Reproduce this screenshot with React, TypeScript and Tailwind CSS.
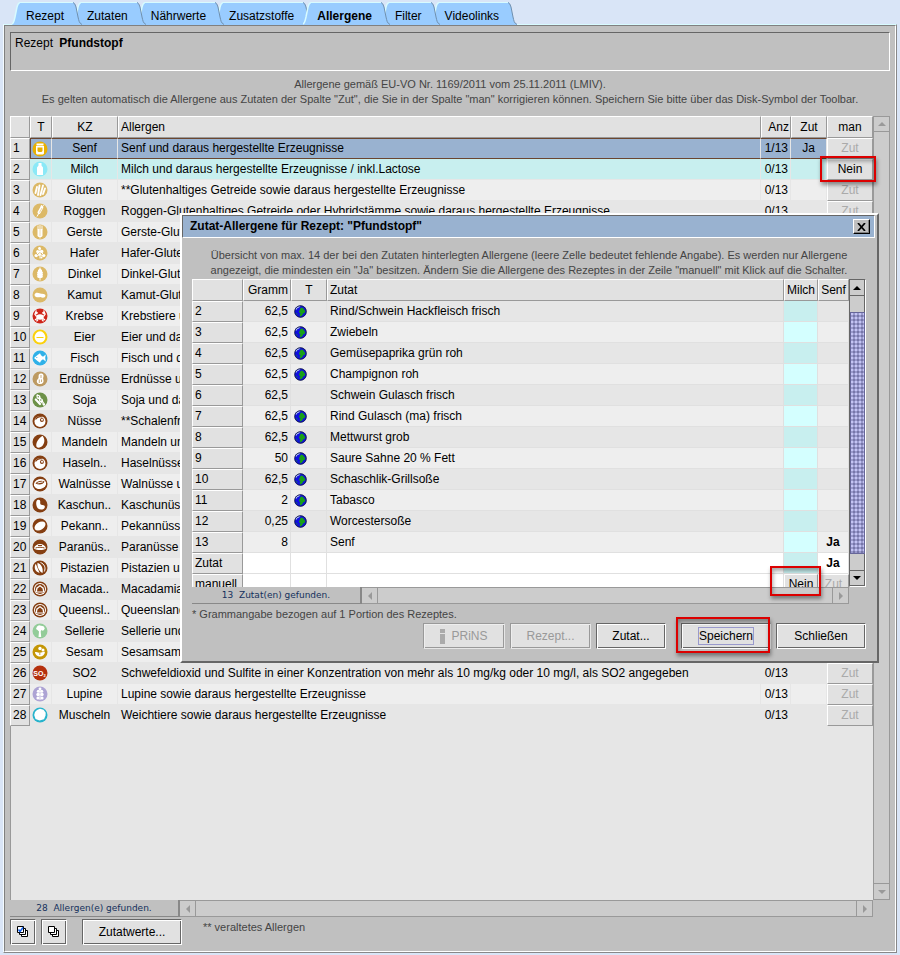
import type { ReactNode } from "react";

type Allergen = {
  kz: string;
  name: string;
  color: string;
  glyph: ReactNode;
};

const nut = (
  <>
    <circle cx="8" cy="8.4" r="5.5" fill="#fff" />
    <path d="M3.500 6.500C5 4 8 3.200 10.500 4" stroke="#853f12" strokeWidth="1.100" fill="none" />
    <circle cx="9.900" cy="6.900" r="2" fill="#853f12" />
    <circle cx="10" cy="6.800" r="1" fill="#fff" />
  </>
);

const macadamia = (
  <>
    <circle cx="8" cy="8" r="6" fill="#fff" />
    <circle cx="8" cy="8" r="5" fill="#853f12" />
    <path d="M8 4l3 2.200 1 1.300v3l-1 1H5l-1-1v-3l1-1.300z" fill="#fff" />
    <path d="M8 5.500l2.500 2 .5 3H5l.500-3z" fill="#853f12" />
  </>
);

const allergens: Allergen[] = [
  { kz: "Senf", name: "Senf und daraus hergestellte Erzeugnisse", color: "#e8b000", glyph: <><path d="M4.500 2.500h7v2h-7zM4 5h8v7.500l-1 1H5l-1-1z" fill="#fff" /><path d="M5.500 6.500h5v3.500l-1 1h-3l-1-1z" fill="#e8b000" /></> },
  { kz: "Milch", name: "Milch und daraus hergestellte Erzeugnisse / inkl.Lactose", color: "#8be9f7", glyph: <path d="M6.500 2h3v2.500L11 6.500V14H5V6.500l1.500-2z" fill="#fff" /> },
  { kz: "Gluten", name: "**Glutenhaltiges Getreide sowie daraus hergestellte Erzeugnisse", color: "#dcb967", glyph: <path d="M3.500 11l1.500-6M6 13l1.500-9.500M8.500 13l2.500-9.500M11 12l2-5.500" stroke="#fff" strokeWidth="1.900" strokeLinecap="round" strokeDasharray="2.5 .3" /> },
  { kz: "Roggen", name: "Roggen-Glutenhaltiges Getreide oder Hybridstämme sowie daraus hergestellte Erzeugnisse", color: "#dcb967", glyph: <><path d="M7 9.500l2.800-5" stroke="#fff" strokeWidth="3" strokeLinecap="round" /><path d="M5 13.500l6.500-11.500M9 4l.5-2" stroke="#fff" /><path d="M7.500 9.500l2.500-4.500" stroke="#dcb967" strokeWidth=".6" /></> },
  { kz: "Gerste", name: "Gerste-Glutenhaltiges Getreide oder Hybridstämme sowie daraus hergestellte Erzeugnisse", color: "#dcb967", glyph: <><path d="M6 1.500v4M8 1v13.500M10 1.500v4" stroke="#fff" strokeWidth=".9" /><path d="M5.500 5h5v7l-1 1h-3l-1-1z" fill="#fff" /><path d="M8 5v7" stroke="#dcb967" strokeWidth=".5" /></> },
  { kz: "Hafer", name: "Hafer-Glutenhaltiges Getreide oder Hybridstämme sowie daraus hergestellte Erzeugnisse", color: "#dcb967", glyph: <><path d="M8 3v10.500M8 6l-3 3M8 6l3 3M8 9l-4 3M8 9l4 3" stroke="#fff" /><g fill="#fff"><circle cx="7.500" cy="3.500" r="1.400" /><circle cx="5.700" cy="6.500" r="1.500" /><circle cx="9.800" cy="6.400" r="1.600" /><circle cx="4" cy="10.500" r="1.500" /><circle cx="7.500" cy="9.500" r="1.300" /><circle cx="11.800" cy="10.500" r="1.600" /><circle cx="9.500" cy="12.500" r="1" /></g></> },
  { kz: "Dinkel", name: "Dinkel-Glutenhaltiges Getreide oder Hybridstämme sowie daraus hergestellte Erzeugnisse", color: "#dcb967", glyph: <><path d="M8 1.500v13" stroke="#fff" /><path d="M8 2.500l2 1.500v1.500l1 .5-.5 1.500.5 1-.5 1.500.5 1-1.500 1H6.500L5 11l.5-1L5 8.500l.5-1L5 6l1-.5V4z" fill="#fff" /></> },
  { kz: "Kamut", name: "Kamut-Glutenhaltiges Getreide oder Hybridstämme sowie daraus hergestellte Erzeugnisse", color: "#dcb967", glyph: <path d="M2.500 7.800C3 5.500 5.500 5.300 7.500 6.300c2 .8 5.700.2 6 2.200-.2 2.500-3 2.700-5 1.500-2.200.7-6 .5-6-2.200z" fill="#fff" /> },
  { kz: "Krebse", name: "Krebstiere und daraus hergestellte Erzeugnisse", color: "#cf2419", glyph: <><ellipse cx="8" cy="9" rx="3.800" ry="2.800" fill="#fff" /><path d="M4.500 8.500L2.900 6.200 4 3.500l.5 2 1.300-1M11.500 8.500l1.600-2.300L12 3.500l-.5 2-1.300-1M5 10.500l-2 1.500M6 11.500l-1.500 1.800M11 10.500l2 1.500M10 11.500l1.500 1.800" stroke="#fff" strokeWidth="1.300" fill="none" /></> },
  { kz: "Eier", name: "Eier und daraus hergestellte Erzeugnisse", color: "#fbd10c", glyph: <><path d="M8 2.200c3 0 5.400 3.400 5.400 6a5.400 5.300 0 0 1-10.800 0c0-2.600 2.400-6 5.400-6z" fill="#fff" /><path d="M4.500 8.500h7" stroke="#fbd10c" /></> },
  { kz: "Fisch", name: "Fisch und daraus hergestellte Erzeugnisse", color: "#2fb1e8", glyph: <><path d="M2 8l3.500-3L8 3.200l1 2 2 1.500 2.800-2.200-.6 3.500.6 3.500L11 9.300l-2 1.500-1 2-2.500-1.800z" fill="#fff" /><circle cx="4.800" cy="7.500" r=".6" fill="#2fb1e8" /></> },
  { kz: "Erdnüsse", name: "Erdnüsse und daraus hergestellte Erzeugnisse", color: "#bd9a61", glyph: <><path d="M8.500 2.500c3-.5 3.500 2.200 2.700 4-.4 1.300.6 2.500.3 4.200-.8 3.300-6.300 3-6.700 0-.2-2.500 1.800-2.700 1.800-4.200C6.500 4.500 6.600 2.800 8.500 2.500z" fill="#fff" /><path d="M9 4v3M7.300 8.500v3.500M9.500 8.500v2.500" stroke="#bd9a61" strokeWidth=".8" /></> },
  { kz: "Soja", name: "Soja und daraus hergestellte Erzeugnisse", color: "#6d9148", glyph: <><path d="M5.500 3.500l6.500 9M3.800 7.500L8 12" stroke="#fff" strokeWidth="2.200" strokeLinecap="round" /><g fill="#fff"><circle cx="6.500" cy="5" r="2" /><circle cx="9" cy="8.500" r="2" /></g><g fill="#6d9148"><circle cx="6.300" cy="4.800" r=".7" /><circle cx="8.800" cy="8" r=".7" /><circle cx="10.800" cy="11" r=".6" /></g></> },
  { kz: "Nüsse", name: "**Schalenfrüchte und daraus hergestellte Erzeugnisse", color: "#853f12", glyph: nut },
  { kz: "Mandeln", name: "Mandeln und daraus hergestellte Erzeugnisse", color: "#853f12", glyph: <path d="M10.500 1.800c2.500 3 2.500 7 0 10-1.500 1.800-4.500 2.500-5.800 1.200C3.200 10 6 4.500 10.500 1.800z" fill="#fff" /> },
  { kz: "Haseln..", name: "Haselnüsse und daraus hergestellte Erzeugnisse", color: "#853f12", glyph: nut },
  { kz: "Walnüsse", name: "Walnüsse und daraus hergestellte Erzeugnisse", color: "#853f12", glyph: <><ellipse cx="8" cy="8" rx="6.200" ry="5" transform="rotate(-15 8 8)" fill="#fff" /><path d="M3.500 7.500C5.500 4.500 10 4 12.500 5.500c-1 3-5.500 4.100-9 2z" fill="#853f12" /><path d="M5.500 7l5.500-1.200" stroke="#fff" /></> },
  { kz: "Kaschun..", name: "Kaschunüsse und daraus hergestellte Erzeugnisse", color: "#853f12", glyph: <path d="M5.800 2.700c2.200-.4 2.700 1 2.400 3-.1 1.600.8 2.300 2.300 2.200 2 0 2.900 1.500 2 3-1.200 2-4.500 2.200-6.500.5S3.300 3.700 5.800 2.700z" fill="#fff" /> },
  { kz: "Pekann..", name: "Pekannüsse und daraus hergestellte Erzeugnisse", color: "#853f12", glyph: <ellipse cx="8" cy="8" rx="6" ry="3.900" transform="rotate(-32 8 8)" fill="#fff" /> },
  { kz: "Paranüs..", name: "Paranüsse und daraus hergestellte Erzeugnisse", color: "#853f12", glyph: <><path d="M2 9.500C3 3.500 13 3.500 14 9.500c-3 2-9 2-12 0z" fill="#fff" /><path d="M3.500 9C6 8 10 8 12.500 9M6 6.500h4" stroke="#853f12" strokeWidth="1" fill="none" /></> },
  { kz: "Pistazien", name: "Pistazien und daraus hergestellte Erzeugnisse", color: "#853f12", glyph: <><path d="M3.800 3.800c-2.300 3.500-.8 8 3.800 9.200zM5.500 2.700c4 1.500 6 5.800 5 10.300C7 11 5 7 5.500 2.700z" fill="#fff" /><path d="M8.500 2.500c4 1.500 5.500 5.500 3.800 9" stroke="#fff" fill="none" /></> },
  { kz: "Macada..", name: "Macadamianüsse und daraus hergestellte Erzeugnisse", color: "#853f12", glyph: macadamia },
  { kz: "Queensl..", name: "Queenslandnüsse und daraus hergestellte Erzeugnisse", color: "#853f12", glyph: macadamia },
  { kz: "Sellerie", name: "Sellerie und daraus hergestellte Erzeugnisse", color: "#93cc99", glyph: <path d="M4 6l1-2.500 2-1.300 2 .6 2.500.5 1.300 2-1 2-1.800.5-.8-1-.5 2 .5 5.200H6.500L7 8.500 5.500 7z" fill="#fff" /> },
  { kz: "Sesam", name: "Sesamsamen und daraus hergestellte Erzeugnisse", color: "#c49605", glyph: <><path d="M3 8c2.800-.5 3.500 1 5 .8C9.800 8.700 10.500 7.500 13 7.800c-.2 3-2.500 4.700-5 4.700S3 10.500 3 8z" fill="#fff" /><circle cx="8" cy="4.500" r="1.700" fill="#fff" /><circle cx="11" cy="6" r="1.500" fill="#fff" /><circle cx="7.800" cy="10" r=".8" fill="#c49605" /></> },
  { kz: "SO2", name: "Schwefeldioxid und Sulfite in einer Konzentration von mehr als 10 mg/kg oder 10 mg/l, als SO2 angegeben", color: "#b5300d", glyph: <text x="7.500" y="10.500" fontSize="7" fontWeight="bold" textAnchor="middle" fill="#fff">SO<tspan fontSize="4" dy="1">2</tspan></text> },
  { kz: "Lupine", name: "Lupine sowie daraus hergestellte Erzeugnisse", color: "#ada3d4", glyph: <><path d="M8 2v12" stroke="#fff" /><g fill="#fff"><circle cx="8" cy="2.800" r="1.400" /><circle cx="6.300" cy="5.300" r="1.500" /><circle cx="9.700" cy="5.300" r="1.500" /><circle cx="6" cy="8.500" r="1.700" /><circle cx="10" cy="8.500" r="1.700" /><circle cx="6" cy="12" r="1.600" /><circle cx="10" cy="12" r="1.600" /></g></> },
  { kz: "Muscheln", name: "Weichtiere sowie daraus hergestellte Erzeugnisse", color: "#27b3cc", glyph: <path d="M5 3l3-1.200 3.500 1 2.200 3-.2 3-1.500 3.500-4.500 1.300-4-1.600-1.300-4 .8-3z" fill="#fff" /> },
];

const ingredients = [
  { nr: "2", gramm: "62,5", globe: true, name: "Rind/Schwein Hackfleisch frisch", senf: "" },
  { nr: "3", gramm: "62,5", globe: true, name: "Zwiebeln", senf: "" },
  { nr: "4", gramm: "62,5", globe: true, name: "Gemüsepaprika grün roh", senf: "" },
  { nr: "5", gramm: "62,5", globe: true, name: "Champignon roh", senf: "" },
  { nr: "6", gramm: "62,5", globe: false, name: "Schwein Gulasch frisch", senf: "" },
  { nr: "7", gramm: "62,5", globe: true, name: "Rind Gulasch (ma) frisch", senf: "" },
  { nr: "8", gramm: "62,5", globe: true, name: "Mettwurst grob", senf: "" },
  { nr: "9", gramm: "50", globe: true, name: "Saure Sahne 20 % Fett", senf: "" },
  { nr: "10", gramm: "62,5", globe: true, name: "Schaschlik-Grillsoße", senf: "" },
  { nr: "11", gramm: "2", globe: true, name: "Tabasco", senf: "" },
  { nr: "12", gramm: "0,25", globe: true, name: "Worcestersoße", senf: "" },
  { nr: "13", gramm: "8", globe: false, name: "Senf", senf: "Ja" },
];

const tabs = ["Rezept", "Zutaten", "Nährwerte", "Zusatzstoffe", "Allergene", "Filter", "Videolinks"];
const tabLayers = ["z-[4]", "z-[3]", "z-[2]", "z-[1]", "z-[5]", "z-[3]", "z-[2]"];

const raised = "border border-t-white border-l-white border-r-[#999] border-b-[#999] bg-[#e1e1e1]";
const etched =
  "border border-t-[#666] border-l-[#666] border-r-white border-b-white bg-[#e1e1e1] shadow-[inset_1px_1px_0_#fff,inset_-1px_-1px_0_#666]";
const etchedDisabled =
  "border border-t-[#999] border-l-[#999] border-r-[#e6e6e6] border-b-[#e6e6e6] bg-[#e1e1e1] text-[#999] shadow-[inset_1px_1px_0_#eee,inset_-1px_-1px_0_#999]";

function Tab({ label, active, layer }: { label: string; active: boolean; layer: string }) {
  return (
    <button role="tab" aria-selected={active} className={`relative -ml-[9px] flex h-[23px] ${layer}`}>
      <svg width="8" height="23" aria-hidden="true">
        <path d="M0 22C2 21 2 19 3 15L5 5Q6 1 8 0V23H0z" fill="#99ccff" />
        <path d="M0 22C2 21 2 19 3 15L5 5Q6 1 8 .5" fill="none" stroke="#d8fbff" strokeWidth="1.500" />
      </svg>
      <span
        className={`h-[23px] border-t border-[#d8fbff] bg-[#99ccff] pr-[9px] pl-[6px] leading-[26px] ${active ? "font-bold" : ""}`}
      >
        {label}
      </span>
      <svg width="9" height="23" aria-hidden="true">
        <path d="M0 0Q2 1 3 5L5 15C6 19 6 21 9 22V23H0z" fill="#99ccff" />
        <path d="M0 .5Q2 1 3 5L5 15C6 19 6 21 9 22.500" fill="none" stroke="#6f8fae" />
      </svg>
    </button>
  );
}

function Triangle({ dir, color }: { dir: "up" | "down" | "left" | "right"; color: string }) {
  const points = {
    up: "0,6 4,2 8,6",
    down: "0,2 4,6 8,2",
    left: "6,0 2,4 6,8",
    right: "2,0 6,4 2,8",
  };
  return (
    <svg width="8" height="8" aria-hidden="true">
      <polygon points={points[dir]} fill={color} />
    </svg>
  );
}

function CountBar({ text }: { text: string }) {
  return (
    <div className="flex h-[17px] w-full">
      <div className="w-[170px] shrink-0 border-r-2 border-b border-[#888] bg-[#c0c0c0] text-center font-['DejaVu_Sans',sans-serif] text-[9px] leading-[17px] whitespace-pre text-[#14305c]">
        {text}
      </div>
      <div className="flex flex-1 justify-between border border-l-0 border-[#999] bg-[#ccc]">
        <button aria-label="Nach links" className="flex w-4 items-center justify-center border-r border-[#999]">
          <Triangle dir="left" color="#999" />
        </button>
        <button aria-label="Nach rechts" className="flex w-4 items-center justify-center border-l border-[#999]">
          <Triangle dir="right" color="#999" />
        </button>
      </div>
    </div>
  );
}

function Globe() {
  return (
    <svg width="13" height="13" viewBox="0 0 13 13" className="block" aria-hidden="true">
      <circle cx="6.500" cy="6.500" r="6" fill="#1010e0" />
      <path d="M1.500 4C2.500 2 4.500 1 6.500 1L5 2.500 3.500 3 2 5z" fill="#c8dcff" />
      <path d="M7 2.500l2 .5 1 1.500 1.300 1.500-.8 2L9 8.500 8.500 10l-2 1.500L5.500 10l1-1.500L5 7l1-3z" fill="#18a018" />
      <path d="M1.500 8l1.500.5.5 1.500z" fill="#18a018" />
      <circle cx="6.500" cy="6.500" r="5.800" fill="none" stroke="#101830" strokeWidth=".8" />
    </svg>
  );
}

function AllergenTable() {
  return (
    <table className="w-full table-fixed border-separate border-spacing-0">
      <colgroup>
        <col className="w-5" />
        <col className="w-[22px]" />
        <col className="w-[66px]" />
        <col />
        <col className="w-[30px]" />
        <col className="w-9" />
        <col className="w-[46px]" />
      </colgroup>
      <thead>
        <tr className="h-[22px]">
          {["", "T", "KZ", "Allergen", "Anz", "Zut", "man"].map((h, i) => (
            <th
              key={i}
              className={`p-0 font-normal ${raised} ${h === "Allergen" ? "pl-[2px] text-left" : h === "Anz" ? "pr-px text-right" : "text-center"}`}
            >
              {h}
            </th>
          ))}
        </tr>
      </thead>
      <tbody>
        {allergens.map((a, i) => {
          const selected = i === 0;
          const milk = i === 1;
          const row = selected ? "bg-[#99b2d0]" : milk ? "bg-[#c8efef]" : i % 2 ? "bg-[#e6e6e6]" : "bg-[#eee]";
          const cell = selected
            ? "border-y border-r border-y-[#6b4630] border-r-[#e6e6e6]"
            : "border-r border-b border-[#e6e6e6]";
          return (
            <tr key={a.kz} className={`h-[21px] ${row}`}>
              <td className={`p-0 pl-[2px] ${raised}`}>{i + 1}</td>
              <td className={`p-0 ${cell} ${selected ? "border-l border-l-[#6b4630] pl-px" : "pl-[2px]"}`}>
                <svg width="16" height="16" viewBox="0 0 16 16" className="block" aria-hidden="true">
                  <circle cx="8" cy="8" r="7.500" fill={a.color} />
                  {a.glyph}
                </svg>
              </td>
              <td className={`p-0 text-center whitespace-nowrap ${cell}`}>{a.kz}</td>
              <td className={`overflow-hidden p-0 pl-[3px] whitespace-nowrap ${cell}`}>{a.name}</td>
              <td className={`p-0 pr-[2px] text-right ${cell}`}>{selected ? "1/13" : "0/13"}</td>
              <td className={`p-0 text-center ${cell} ${selected ? "border-r-[#6b4630]" : ""}`}>
                {selected ? "Ja" : ""}
              </td>
              <td className="relative p-0">
                <button className={`block h-[21px] w-full ${raised} ${milk ? "" : "text-[#aaa]"}`}>
                  {milk ? "Nein" : "Zut"}
                </button>
                {milk && (
                  <div className="pointer-events-none absolute -top-[3px] -right-[3px] -left-[7px] z-10 h-[26px] border-2 border-[#dc0000] shadow-[1px_3px_4px_rgba(0,0,0,.4),inset_1px_3px_4px_rgba(0,0,0,.35)]" />
                )}
              </td>
            </tr>
          );
        })}
      </tbody>
    </table>
  );
}

function IngredientTable() {
  return (
    <table className="w-full table-fixed border-separate border-spacing-0">
      <colgroup>
        <col className="w-[51px]" />
        <col className="w-12" />
        <col className="w-9" />
        <col />
        <col className="w-[34px]" />
        <col className="w-[31px]" />
      </colgroup>
      <thead>
        <tr className="h-[22px]">
          {["", "Gramm", "T", "Zutat", "Milch", "Senf"].map((h, i) => (
            <th
              key={i}
              className={`p-0 font-normal whitespace-nowrap ${raised} ${h === "Zutat" ? "pl-[2px] text-left" : h === "Gramm" ? "pr-[2px] text-right" : "text-center"}`}
            >
              {h}
            </th>
          ))}
        </tr>
      </thead>
      <tbody>
        {ingredients.map((z, i) => {
          const cell = "border-r border-b border-[#e0e0e0]";
          return (
            <tr key={z.nr} className={`h-[21px] ${i % 2 ? "bg-[#eee]" : "bg-[#e6e6e6]"}`}>
              <td className={`p-0 pl-[2px] ${raised}`}>{z.nr}</td>
              <td className={`p-0 pr-[2px] text-right ${cell}`}>{z.gramm}</td>
              <td className={`p-0 pl-[3px] ${cell}`}>{z.globe && <Globe />}</td>
              <td className={`p-0 pl-[3px] ${cell}`}>{z.name}</td>
              <td className={`p-0 ${cell} ${i % 2 ? "bg-[#d4ffff]" : "bg-[#c8efef]"}`} />
              <td className={`p-0 text-center font-bold ${cell}`}>{z.senf}</td>
            </tr>
          );
        })}
        <tr className="h-[21px] bg-white">
          <td className={`p-0 pl-[2px] ${raised}`}>Zutat</td>
          <td className="border-r border-b border-[#e0e0e0] p-0" />
          <td className="border-r border-b border-[#e0e0e0] p-0" />
          <td className="border-r border-b border-[#e0e0e0] p-0" />
          <td className="border-r border-b border-[#e0e0e0] bg-[#c8efef] p-0" />
          <td className="border-r border-b border-[#e0e0e0] p-0 text-center font-bold">Ja</td>
        </tr>
        <tr className="h-[21px] bg-white">
          <td className={`p-0 pl-[2px] ${raised}`}>manuell</td>
          <td className="border-r border-[#e0e0e0] p-0" />
          <td className="border-r border-[#e0e0e0] p-0" />
          <td className="border-r border-[#e0e0e0] p-0" />
          <td className="p-0">
            <button className={`block h-[21px] w-full ${raised}`}>Nein</button>
          </td>
          <td className="p-0">
            <button className={`block h-[21px] w-full text-[#aaa] ${raised}`}>Zut</button>
          </td>
        </tr>
      </tbody>
    </table>
  );
}

function IngredientDialog() {
  return (
    <section
      role="dialog"
      aria-labelledby="dialog-title"
      className="absolute top-[213px] right-[21px] left-[180px] z-20 border-2 border-t-white border-r-[#666] border-b-[#666] border-l-white bg-[#c0c0c0] pb-3"
    >
      <header className="mr-[2px] flex h-[23px] items-center justify-between border border-t-[#666] border-r-white border-b-white border-l-[#666] bg-[#99b2d0] pr-1 pl-[7px]">
        <h2 id="dialog-title" className="font-bold">
          Zutat-Allergene für Rezept: "Pfundstopf"
        </h2>
        <button
          aria-label="Dialog schließen"
          className="flex h-[15px] w-[17px] items-center justify-center border border-t-white border-r-black border-b-black border-l-white bg-[#c0c0c0] shadow-[inset_-1px_-1px_0_#808080]"
        >
          <svg width="9" height="8" aria-hidden="true">
            <path d="M1 0l7 8M8 0L1 8" stroke="#000" strokeWidth="1.700" />
          </svg>
        </button>
      </header>

      <div className="pt-[10px] pr-[11px] pl-[10px]">
        <p className="mb-px text-center text-[11px] leading-[15px] text-[#444]">
          Übersicht von max. 14 der bei den Zutaten hinterlegten Allergene (leere Zelle bedeutet fehlende Angabe). Es werden nur Allergene
          <br />
          angezeigt, die mindesten ein "Ja" besitzen. Ändern Sie die Allergene des Rezeptes in der Zeile "manuell" mit Klick auf die Schalter.
        </p>

        <div className="flex">
          <div className="relative flex-1">
            <div className="h-[308px] overflow-hidden">
              <IngredientTable />
            </div>
            <CountBar text="13  Zutat(en) gefunden." />
            <div className="pointer-events-none absolute right-7 bottom-2 z-10 h-[30px] w-[51px] border-2 border-[#dc0000] shadow-[1px_3px_4px_rgba(0,0,0,.4),inset_1px_3px_4px_rgba(0,0,0,.35)]" />
          </div>
          <div className="flex h-[308px] w-[17px] flex-col border border-t-[#666] border-r-white border-b-white border-l-[#666] bg-[#ccc]">
            <button aria-label="Nach oben" className="flex h-4 items-center justify-center border-r border-b border-[#666]">
              <Triangle dir="up" color="#000" />
            </button>
            <div className="h-4 border-r border-[#666]" />
            <div className="h-[242px] border border-[#666699] bg-[#9999cc] bg-[radial-gradient(circle_at_1px_1px,#c4c4f4_1px,transparent_1px),radial-gradient(circle_at_3px_3px,#7777aa_1px,transparent_1px)] bg-[size:4px_4px]" />
            <div className="flex-1 border-r border-[#666]" />
            <button aria-label="Nach unten" className="flex h-4 items-center justify-center border-t border-r border-b border-[#666]">
              <Triangle dir="down" color="#000" />
            </button>
          </div>
        </div>

        <p className="pt-[3px] text-[11px] leading-[15px] text-[#444]">* Grammangabe bezogen auf 1 Portion des Rezeptes.</p>

        <div className="flex justify-end gap-[5px] pt-px">
          <button disabled className={`flex h-[26px] w-[82px] items-center justify-center gap-[6px] ${etchedDisabled}`}>
            <svg width="5" height="15" aria-hidden="true">
              <path d="M0 0h5v4H0zM0 5h5v10H0z" fill="#aaa" />
            </svg>
            PRiNS
          </button>
          <button disabled className={`h-[26px] w-[81px] ${etchedDisabled}`}>
            Rezept...
          </button>
          <button className={`mr-[10px] h-[26px] w-[70px] ${etched}`}>Zutat...</button>
          <div className="relative">
            <button className={`h-[26px] w-[90px] ${etched}`}>
              <span className="border border-[#9999cc] py-px">Speichern</span>
            </button>
            <div className="pointer-events-none absolute -top-[6px] -left-[5px] h-9 w-[94px] border-2 border-[#dc0000] shadow-[1px_3px_4px_rgba(0,0,0,.4),inset_1px_3px_4px_rgba(0,0,0,.35)]" />
          </div>
          <button className={`h-[26px] w-[90px] ${etched}`}>Schließen</button>
        </div>
      </div>
    </section>
  );
}

function StackIcon({ checked }: { checked?: boolean }) {
  return (
    <svg width="12" height="12" viewBox="0 0 12 12" aria-hidden="true">
      <g fill="#fff" stroke="#000">
        <path d="M4.500 4.500h6v6h-6z" />
        <path d="M2.500 2.500h6v6h-6z" />
        <path d="M.5.5h6v6h-6z" />
      </g>
      {checked && <path d="M1.500 3.500l1.500 2 3-4" fill="none" stroke="#1060f0" strokeWidth="1.500" />}
    </svg>
  );
}

export default function App() {
  return (
    <main className="relative flex min-h-screen flex-col bg-[#d9e5f7] px-[3px] pt-[2px] pb-[2px] font-['Liberation_Sans',Arial,sans-serif] text-[12px] leading-[15px] text-black">
      <nav role="tablist" className="relative z-10 flex pl-[18px]">
        {tabs.map((t, i) => (
          <Tab key={t} label={t} active={t === "Allergene"} layer={tabLayers[i]} />
        ))}
      </nav>

      <div className="-mt-px flex flex-1 flex-col border border-t-[#d8fbff] border-r-[#888] border-b-[#888] border-l-[#f4fbff]">
        <div className="flex flex-1 flex-col border border-t-[#808080] border-r-white border-b-white border-l-[#808080] bg-[#c0c0c0] px-[5px] pt-[6px] pb-[6px]">
          <div className="h-[39px] border border-t-[#666] border-r-white border-b-white border-l-[#666] px-1 pt-[3px]">
            Rezept <b className="ml-[3px]">Pfundstopf</b>
          </div>

          <p className="pt-[6px] pb-[9px] text-center text-[11px] leading-[15px] text-[#444]">
            Allergene gemäß EU-VO Nr. 1169/2011 vom 25.11.2011 (LMIV).
            <br />
            Es gelten automatisch die Allergene aus Zutaten der Spalte "Zut", die Sie in der Spalte "man" korrigieren können. Speichern Sie bitte über das Disk-Symbol der Toolbar.
          </p>

          <div className="flex flex-1">
            <div className="flex flex-1 flex-col">
              <div className="flex-1 bg-[#e6e6e6] shadow-[inset_1px_0_0_#999]">
                <AllergenTable />
              </div>
              <CountBar text="28  Allergen(e) gefunden." />
            </div>
            <div className="mb-[17px] flex w-[17px] flex-col justify-between border border-[#999] bg-[#ccc]">
              <button aria-label="Nach oben" className="flex h-[15px] items-center justify-center border-b border-[#999]">
                <Triangle dir="up" color="#999" />
              </button>
              <button aria-label="Nach unten" className="flex h-4 items-center justify-center border-t border-[#999]">
                <Triangle dir="down" color="#999" />
              </button>
            </div>
          </div>

          <footer className="flex pt-[2px]">
            <button aria-label="Alle auswählen" className={`flex h-[26px] w-[26px] items-center justify-center ${etched}`}>
              <StackIcon checked />
            </button>
            <button aria-label="Auswahl aufheben" className={`ml-[5px] flex h-[26px] w-[26px] items-center justify-center ${etched}`}>
              <StackIcon />
            </button>
            <button className={`ml-[15px] h-[26px] w-[100px] ${etched}`}>Zutatwerte...</button>
            <span className="ml-[21px] text-[11px] leading-[17px] text-[#444]">** veraltetes Allergen</span>
          </footer>
        </div>
      </div>

      <IngredientDialog />
    </main>
  );
}
